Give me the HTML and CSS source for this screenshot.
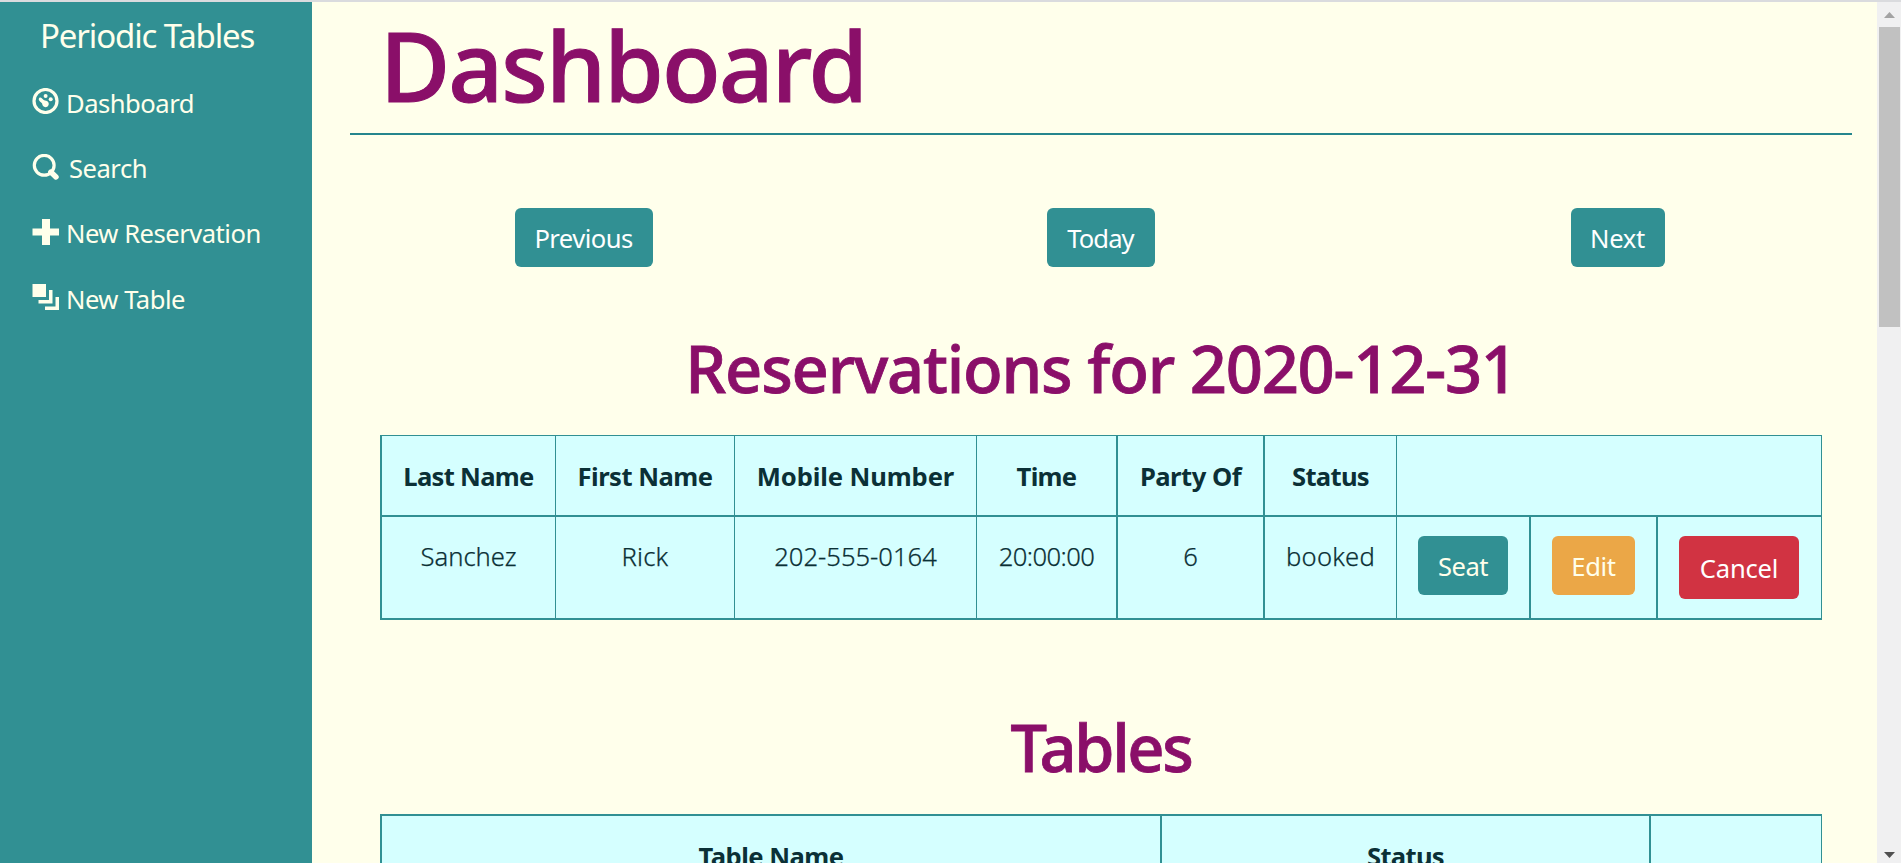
FILE: index.html
```html
<!DOCTYPE html>
<html lang="en">
<head>
<meta charset="utf-8">
<title>Periodic Tables</title>
<link rel="stylesheet" href="styles.css">
</head>
<body>
<div class="app">
  <nav class="sidebar">
    <div class="brand">Periodic Tables</div>
    <a class="nav-item"><svg class="icon" viewBox="0 0 27 26"><circle cx="13.5" cy="13" r="11.5" fill="none" stroke="currentColor" stroke-width="3.2"/><circle cx="13.6" cy="8.1" r="2"/><circle cx="18.7" cy="11.2" r="2"/><path d="M6.800 10.800c.4-1.400 1.900-1.700 3-.6l1.900 1.900c1.600.7 3.600.6 4.600 2.200 1.300 2.200-.3 4.900-2.700 4.900-2.300 0-3.300-1.800-3.500-3.600-.8-1.300-3.800-2.700-3.300-4.800z"/></svg><span>Dashboard</span></a>
    <a class="nav-item nav-search"><svg class="icon" viewBox="0 0 27 26"><circle cx="12.200" cy="11.300" r="9.900" fill="none" stroke="currentColor" stroke-width="3.200"/><path d="M18.800 18 24 23" stroke="currentColor" stroke-width="5.400" stroke-linecap="round"/></svg><span>Search</span></a>
    <a class="nav-item"><svg class="icon" viewBox="0 0 27 26"><path d="M10 0h8v9.500h9v7h-9V26h-8v-9.500H.500v-7H10z"/></svg><span>New Reservation</span></a>
    <a class="nav-item"><svg class="icon" viewBox="0 0 27 26"><path d="M.500 0H14v13H.500zM17 6h3.500v13.500h-14V16H17zM23.500 13H27v13H13v-3.500h10.500z"/></svg><span>New Table</span></a>
  </nav>
  <main class="main">
    <h1>Dashboard</h1>
    <div class="days">
      <button class="btn btn-prev">Previous</button>
      <button class="btn btn-today">Today</button>
      <button class="btn btn-next">Next</button>
    </div>
    <h2 class="h-res">Reservations for 2020-12-31</h2>
    <div class="table reservations">
      <div class="cell head tight">Last Name</div>
      <div class="cell head">First Name</div>
      <div class="cell head loose">Mobile Number</div>
      <div class="cell head thick tight">Time</div>
      <div class="cell head thick">Party Of</div>
      <div class="cell head tight">Status</div>
      <div class="cell head span"></div>
      <div class="cell">Sanchez</div>
      <div class="cell wide">Rick</div>
      <div class="cell">202-555-0164</div>
      <div class="cell thick time">20:00:00</div>
      <div class="cell thick">6</div>
      <div class="cell wide">booked</div>
      <div class="cell thick action"><button class="btn btn-seat">Seat</button></div>
      <div class="cell thick action"><button class="btn btn-edit">Edit</button></div>
      <div class="cell action"><button class="btn btn-cancel">Cancel</button></div>
    </div>
    <h2 class="h-tables">Tables</h2>
    <div class="table seating">
      <div class="cell head thick">Table Name</div>
      <div class="cell head thick tight">Status</div>
      <div class="cell head"></div>
    </div>
  </main>
  <div class="scrollbar">
    <svg class="arrow up" viewBox="0 0 11 6"><path d="M5.500 0 11 6H0z"/></svg>
    <div class="thumb"></div>
    <svg class="arrow down" viewBox="0 0 11 6"><path d="M0 0h11L5.500 6z"/></svg>
  </div>
</div>
</body>
</html>
```
FILE: styles.css
```css
* { box-sizing: border-box; }
body {
  margin: 0;
  height: 100vh;
  overflow: hidden;
  background: #ffffeb;
  font-family: "Noto Sans", "Open Sans", sans-serif;
  font-size: 25.6px;
}
.app {
  display: grid;
  grid-template-columns: 312px 1fr 24px;
  height: 100vh;
  border-top: 2px solid #dadbde;
}
.sidebar { background: #319093; color: #ffffeb; }
.brand {
  height: 68px;
  padding: 5px 0 0 40px;
  font-size: 33px;
  line-height: 58px;
  letter-spacing: -1.140px;
  white-space: nowrap;
}
.nav-item {
  display: flex;
  align-items: center;
  gap: 7px;
  height: 65.400px;
  padding-left: 32px;
  letter-spacing: -.5px;
  white-space: nowrap;
}
.nav-item span { padding-top: 1px; }
.nav-search { gap: 10px; }
.icon { width: 27px; height: 26px; margin-bottom: 3px; fill: currentColor; flex: none; }
.main { min-width: 0; height: 861px; overflow: hidden; padding: 0 25px 0 38px; }
h1, h2 { margin: 0; color: #8a0f69; font-weight: 500; white-space: nowrap; }
h1 {
  height: 133px;
  padding-left: 30px;
  border-bottom: 2px solid #25868d;
  font-size: 96px;
  line-height: 126px;
  letter-spacing: -1.900px;
  -webkit-text-stroke: 1px #8a0f69;
}
h2 { height: 80px; font-size: 65px; line-height: 83px; text-align: center; -webkit-text-stroke: .800px #8a0f69; }
.h-res { margin: 60px 0 28px; letter-spacing: -1.200px; }
.h-tables { margin: 86px 0 28px; letter-spacing: -2.400px; }
.days {
  display: grid;
  grid-template-columns: repeat(3, 1fr);
  justify-items: center;
  margin: 73px -24px 0 -25px;
}
.btn {
  display: block;
  height: 59px;
  margin: 0;
  padding: 2px 0 0;
  border: 0;
  border-radius: 6px;
  background: #319093;
  color: #fff;
  font: inherit;
  line-height: 57px;
}
.btn-prev { width: 138px; letter-spacing: -.55px; }
.btn-today { width: 108px; letter-spacing: -.900px; }
.btn-next { width: 94px; letter-spacing: -.3px; }
.btn-seat { width: 90px; color: #ffffeb; letter-spacing: -.5px; }
.btn-edit { width: 83px; background: #eba747; color: #ffffeb; letter-spacing: -.37px; }
.btn-cancel { width: 120px; height: 63px; background: #d13342; line-height: 61px; letter-spacing: -.22px; }
.table {
  display: grid;
  width: 1442px;
  margin-left: 30px;
  border-left: 2px solid #319093;
  background: #d5ffff;
  color: #0b3036;
  text-align: center;
  white-space: nowrap;
}
.reservations {
  grid-template-columns: 174px 179px 242px 141px 147px 132px 134px 127px 164px;
  grid-template-rows: 81px 103px;
  border-top: 1px solid #319093;
}
.seating {
  grid-template-columns: 780px 489px 171px;
  grid-template-rows: 81px;
  border-top: 2px solid #319093;
}
.cell {
  border-right: 1px solid #319093;
  border-bottom: 2px solid #319093;
  line-height: 79px;
  font-weight: 300;
  -webkit-text-stroke: .250px #0b3036;
}
.thick { border-right-width: 2px; }
.head { padding-top: 2px; font-weight: 700; letter-spacing: -.500px; line-height: 78px; -webkit-text-stroke: 0; }
.tight { letter-spacing: -.700px; }
.loose { letter-spacing: -.120px; }
.time { letter-spacing: -.600px; }
.wide { letter-spacing: .200px; }
.span { grid-column: span 3; }
.action { padding: 19px 0 0 21px; font-weight: 400; -webkit-text-stroke: 0; }
.scrollbar {
  display: flex;
  flex-direction: column;
  align-items: center;
  padding: 10px 0 5px;
  background: #f0f0f1;
}
.arrow { width: 11px; height: 6px; flex: none; }
.up { fill: #a3a3a3; }
.down { margin-top: auto; fill: #505050; }
.thumb { width: 21px; height: 300px; margin-top: 9px; background: #c1c1c1; }
```
